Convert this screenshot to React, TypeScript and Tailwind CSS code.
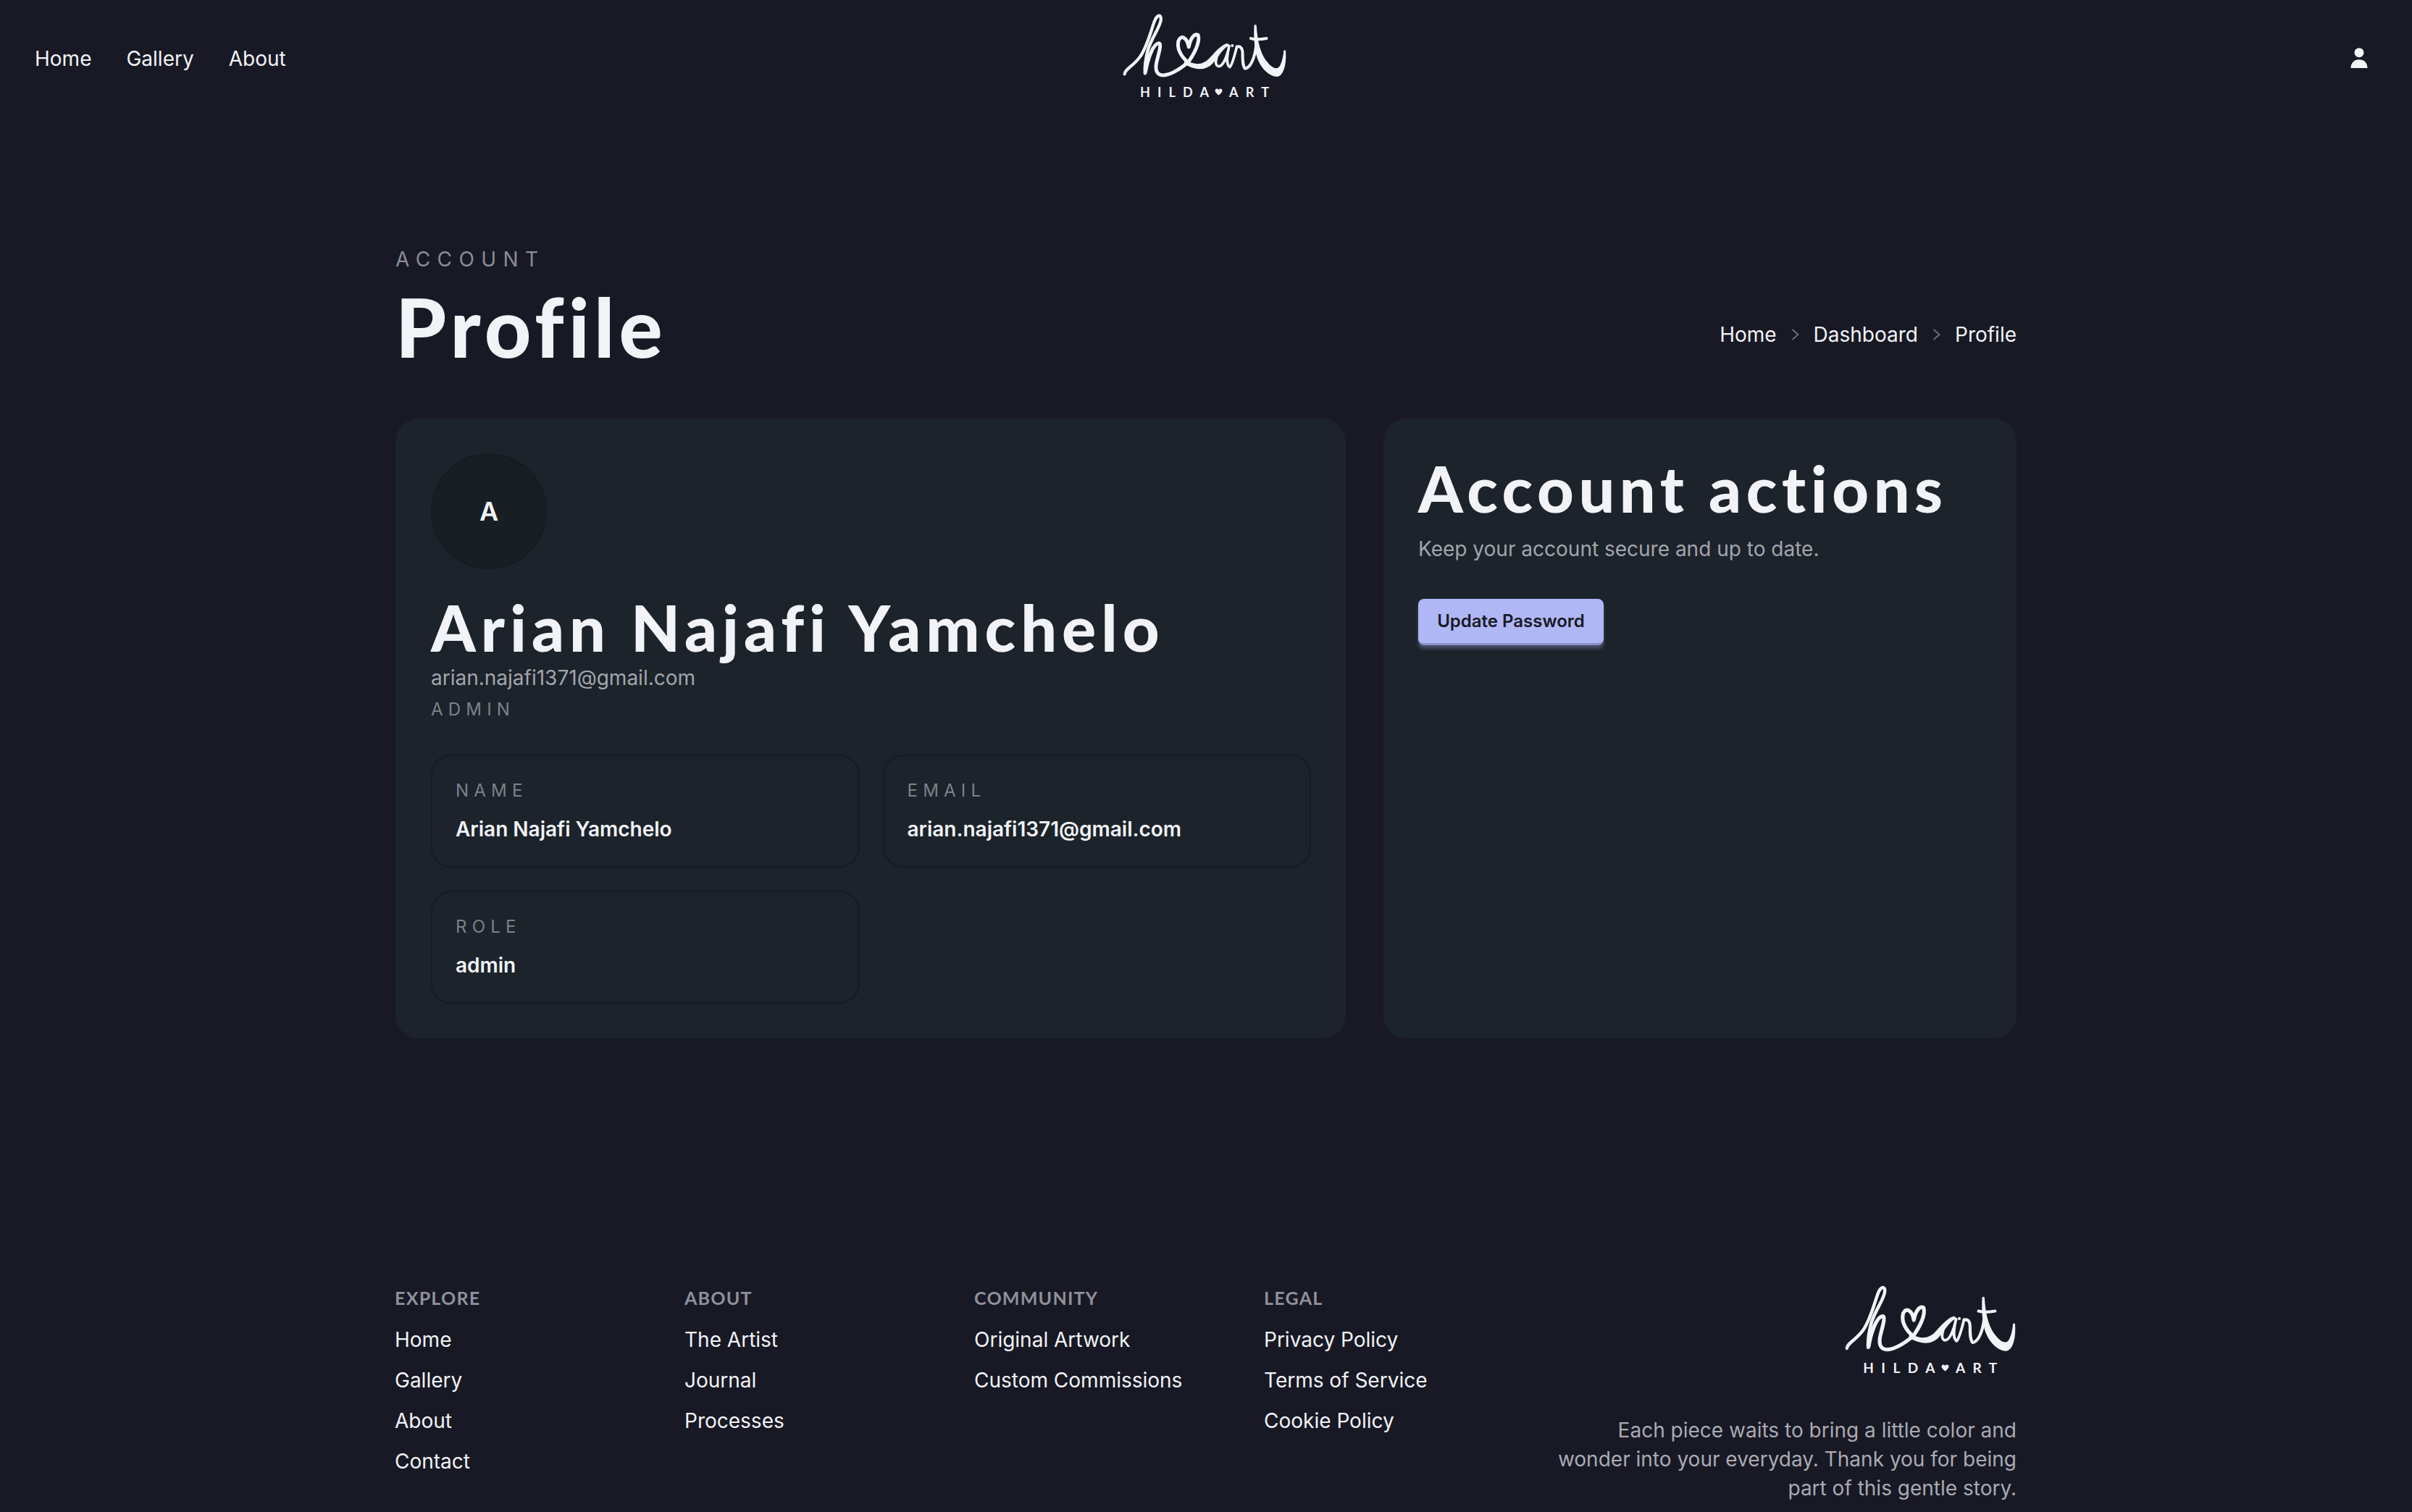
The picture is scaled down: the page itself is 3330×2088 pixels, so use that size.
const HeadingFont = "font-['Lato',sans-serif]";

const Script = () => (
  <svg viewBox="146 50 690 272" className="w-full block" fill="none" stroke="#f1f3f7" strokeLinecap="round" strokeLinejoin="round">
    <path strokeWidth="13" d="M157 305C158 284 196 270 222 232C252 190 268 120 282 84C292 58 308 54 309 74C310 104 270 150 254 206C246 236 240 268 242 302" />
    <path strokeWidth="15" d="M244 298C254 240 276 178 300 176C314 178 298 222 290 258C284 290 292 310 320 310C350 308 384 286 410 266" />
    <path strokeWidth="15" d="M424 258C392 232 374 198 382 166C392 140 418 150 425 192C432 156 448 134 464 142C474 172 446 224 418 262" />
    <path fill="#f1f3f7" stroke="none" d="M410 244C440 266 480 272 510 240C534 214 556 186 586 176L590 188C566 200 548 236 524 262C490 298 440 284 404 262Z" />
    <path strokeWidth="11" d="M588 184C560 184 540 224 538 256C540 280 560 278 574 250C584 230 590 208 594 188C586 222 578 262 596 276C606 270 618 222 626 190" />
    <circle cx="607" cy="186" r="6" fill="#f1f3f7" stroke="none" />
    <path strokeWidth="12" d="M626 192C640 186 650 196 650 220C650 246 650 270 660 282C682 280 700 240 706 190" />
    <path fill="#f1f3f7" stroke="none" d="M698 104C698 98 706 96 708 102C712 170 726 226 756 258C776 282 796 288 806 270C816 252 820 228 822 206L830 206C834 252 826 302 802 314C780 322 744 302 722 262C700 224 696 170 698 104Z" />
    <path strokeWidth="12" d="M684 156C704 162 728 160 750 156" />
  </svg>
);

const LogoBlock = ({ w, cls, gap }: { w: number; cls: string; gap: string }) => (
  <div className="flex flex-col items-center" style={{ width: w }}>
    <Script />
    <div className={`flex items-center justify-center text-[#f1f3f7] font-['Lato',sans-serif] font-bold pl-[10px] ${cls} ${gap}`}>
      <span>HILDA</span>
      <svg viewBox="0 0 24 22" className="w-[11px] h-[10px] shrink-0 mr-[8px] ml-[-3px]" fill="#f1f3f7"><path d="M12 21C5 15 1 11 1 6.500C1 3 3.500 1 6.500 1C9 1 11 2.500 12 5C13 2.500 15 1 17.500 1C20.500 1 23 3 23 6.500C23 11 19 15 12 21Z" /></svg>
      <span>ART</span>
    </div>
  </div>
);

const Field = ({ label, value }: { label: string; value: string }) => (
  <div className="h-[156px] rounded-[28px] border-2 border-[#171a26] px-8 pt-[32px]">
    <div className="text-[24px] leading-[32px] tracking-[0.3em] text-[#7d818b]">{label}</div>
    <div className="mt-[17px] text-[28px] leading-[40px] font-semibold text-[#f1f3f7]">{value}</div>
  </div>
);

const Chevron = () => (
  <svg viewBox="0 0 18 24" className="w-[19px] h-[24px]" fill="none" stroke="#6f727c" strokeWidth="1.800"><path d="M5 5l8 7-8 7" /></svg>
);

const FooterCol = ({ title, links }: { title: string; links: string[] }) => (
  <div className="w-[400px]">
    <div className={`${HeadingFont} text-[25px] leading-[36px] font-bold tracking-[0.05em] text-[#8f919b]`}>{title}</div>
    <ul className="mt-[12px] flex flex-col">
      {links.map((l) => (
        <li key={l} className="h-[56px] leading-[56px] text-[28px] text-[#f1f3f7]">{l}</li>
      ))}
    </ul>
  </div>
);

export default function App() {
  return (
    <div className="h-[2088px] overflow-hidden bg-[#181924] font-['Inter',sans-serif] text-[#f1f3f7]">
      <header className="h-[160px] px-12 flex items-start justify-between relative">
        <nav className="flex gap-12 text-[28px] leading-[40px] pt-[61px]">
          <span>Home</span>
          <span>Gallery</span>
          <span>About</span>
        </nav>
        <div className="absolute left-1/2 top-[18px] -translate-x-1/2 ml-[-2px]">
          <LogoBlock w={228} cls="text-[18px] leading-[22px] mt-[8px]" gap="tracking-[0.565em] gap-[1px]" />
        </div>
        <svg viewBox="0 0 24 28" className="w-[24px] h-[28px] mt-[66px] mr-[13px]" fill="#f1f3f7">
          <circle cx="12" cy="6.700" r="6.500" />
          <path d="M0.500 28C0.500 21 5 16.300 12 16.300C19 16.300 23.500 21 23.500 28Z" />
        </svg>
      </header>

      <main className="mx-auto w-[2238px] pt-[180px]">
        <div className="flex items-end justify-between">
          <div>
            <div className="text-[28px] leading-[36px] tracking-[0.335em] text-[#8a8c96]">ACCOUNT</div>
            <h1 className={`${HeadingFont} text-[112px] leading-[130px] font-black tracking-[0.055em] mt-[10px] whitespace-nowrap`}>Profile</h1>
          </div>
          <div className="flex items-center gap-[16px] text-[28px] leading-[40px] pb-[34px]">
            <span>Home</span><Chevron /><span>Dashboard</span><Chevron /><span>Profile</span>
          </div>
        </div>

        <div className="grid grid-cols-[1312px_1fr] gap-[52px] mt-[62px]">
          <section className="h-[856px] rounded-[32px] bg-[#1c232a] pl-[49px] pr-[48px] pt-[48px]">
            <div className="w-[160px] h-[160px] rounded-full bg-[#191e24] border-2 border-[#171b20] flex items-center justify-center text-[36px] font-semibold">A</div>
            <h2 className={`${HeadingFont} text-[88px] leading-[104px] font-black tracking-[0.08em] mt-[28px] whitespace-nowrap`}>Arian Najafi Yamchelo</h2>
            <div className="text-[28px] leading-[40px] text-[#a3a5ae] -mt-[2px]">arian.najafi1371@gmail.com</div>
            <div className="text-[24px] leading-[32px] tracking-[0.3em] text-[#7d818b] mt-[8px]">ADMIN</div>
            <div className="grid grid-cols-2 gap-8 mt-[46px]">
              <Field label="NAME" value="Arian Najafi Yamchelo" />
              <Field label="EMAIL" value="arian.najafi1371@gmail.com" />
              <Field label="ROLE" value="admin" />
            </div>
          </section>
          <section className="h-[856px] rounded-[32px] bg-[#1c232a] pl-[48px] pr-[48px] pt-[48px]">
            <h2 className={`${HeadingFont} text-[88px] leading-[104px] font-black tracking-[0.075em] mt-[-4px] whitespace-nowrap`}>Account actions</h2>
            <p className="text-[28px] leading-[40px] text-[#a3a5ae] mt-[12px]">Keep your account secure and up to date.</p>
            <button className="mt-[49px] block h-[64px] w-[256px] rounded-[8px] bg-[#b0b7f5] text-[24px] font-semibold text-[#191a25] border-b-[3px] border-[#8d93c9] shadow-[0_5px_4px_rgba(176,183,245,0.3)]">Update Password</button>
          </section>
        </div>
      </main>

      <footer className="mx-auto w-[2238px] mt-[340px] flex justify-between">
        <div className="flex -ml-[1px]">
          <FooterCol title="EXPLORE" links={["Home", "Gallery", "About", "Contact"]} />
          <FooterCol title="ABOUT" links={["The Artist", "Journal", "Processes"]} />
          <FooterCol title="COMMUNITY" links={["Original Artwork", "Custom Commissions"]} />
          <FooterCol title="LEGAL" links={["Privacy Policy", "Terms of Service", "Cookie Policy"]} />
        </div>
        <div className="flex flex-col items-end">
          <LogoBlock w={238} cls="text-[19px] leading-[22px] mt-[10px]" gap="tracking-[0.55em] gap-[1px]" />
          <p className="w-[636px] mt-[55px] text-right text-[28px] leading-[40px] text-[#a9abb4]">Each piece waits to bring a little color and wonder into your everyday. Thank you for being part of this gentle story.</p>
        </div>
      </footer>
    </div>
  );
}
